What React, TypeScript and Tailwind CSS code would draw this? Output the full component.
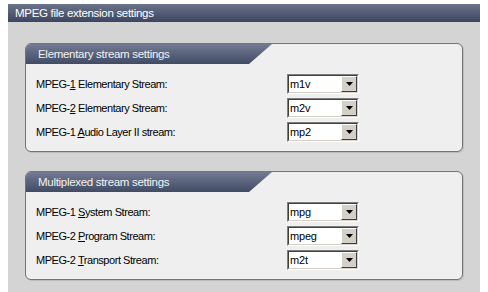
import React from "react";

const U = ({ c }: { c: string }) => <span className="underline underline-offset-[1px]">{c}</span>;

function Combo({ value }: { value: string }) {
  return (
    <div className="w-[72px] h-[20px] border border-t-[#808080] border-l-[#808080] border-b-white border-r-white">
      <div className="w-full h-full border border-t-[#404040] border-l-[#404040] border-b-[#d4d0c8] border-r-[#d4d0c8] bg-white flex items-center">
        <span className="flex-1 pl-[1px] text-[11px] leading-none text-black tracking-[-0.2px]">{value}</span>
        <div className="w-[16px] h-[16px] bg-[#d4d0c8] border border-t-[#ffffff] border-l-[#ffffff] border-b-[#404040] border-r-[#404040] flex items-center justify-center">
          <svg width="7" height="4" viewBox="0 0 7 4">
            <path d="M0 0 H7 L3.5 4 Z" fill="#000" />
          </svg>
        </div>
      </div>
    </div>
  );
}

function Group({ title, rows }: { title: string; rows: { label: React.ReactNode; value: string }[] }) {
  return (
    <div className="w-[438px] border border-[#747474] rounded-[6px] bg-[#efefef] overflow-hidden shadow-[1px_1px_0_#bdbdbd]">
      <div className="w-[246px] h-[20px] bg-gradient-to-b from-[#737c93] to-[#414b64] [clip-path:polygon(0_0,100%_0,calc(100%-23px)_100%,0_100%)] pl-[12px] text-[11.5px] tracking-[-0.3px] leading-[20px] text-[#f2f2f2]">
        {title}
      </div>
      <div className="pt-[10px] pb-[9px] pl-[10px] flex flex-col gap-[4px]">
        {rows.map((r, i) => (
          <div key={i} className="flex items-center h-[20px]">
            <div className="w-[251px] text-[11px] tracking-[-0.45px] text-black">{r.label}</div>
            <Combo value={r.value} />
          </div>
        ))}
      </div>
    </div>
  );
}

export default function App() {
  return (
    <div className="w-[488px] h-[292px] bg-white font-['Liberation_Sans',Arial,sans-serif] overflow-hidden">
      <div className="ml-[8px] w-[472px] h-full pt-[4px] flex flex-col">
        <div className="h-[18px] bg-gradient-to-b from-[#6b7389] to-[#3c4660] pl-[7px] text-[11.5px] tracking-[-0.3px] leading-[18px] text-white">
          MPEG file extension settings
        </div>
        <div className="flex-1 bg-[#d4d4d4] pl-[17px] pt-[21px] flex flex-col gap-[19px]">
          <Group
            title="Elementary stream settings"
            rows={[
              { label: <>MPEG-<U c="1" /> Elementary Stream:</>, value: "m1v" },
              { label: <>MPEG-<U c="2" /> Elementary Stream:</>, value: "m2v" },
              { label: <>MPEG-1 <U c="A" />udio Layer II stream:</>, value: "mp2" },
            ]}
          />
          <Group
            title="Multiplexed stream settings"
            rows={[
              { label: <>MPEG-1 <U c="S" />ystem Stream:</>, value: "mpg" },
              { label: <>MPEG-2 <U c="P" />rogram Stream:</>, value: "mpeg" },
              { label: <>MPEG-2 <U c="T" />ransport Stream:</>, value: "m2t" },
            ]}
          />
        </div>
      </div>
    </div>
  );
}
